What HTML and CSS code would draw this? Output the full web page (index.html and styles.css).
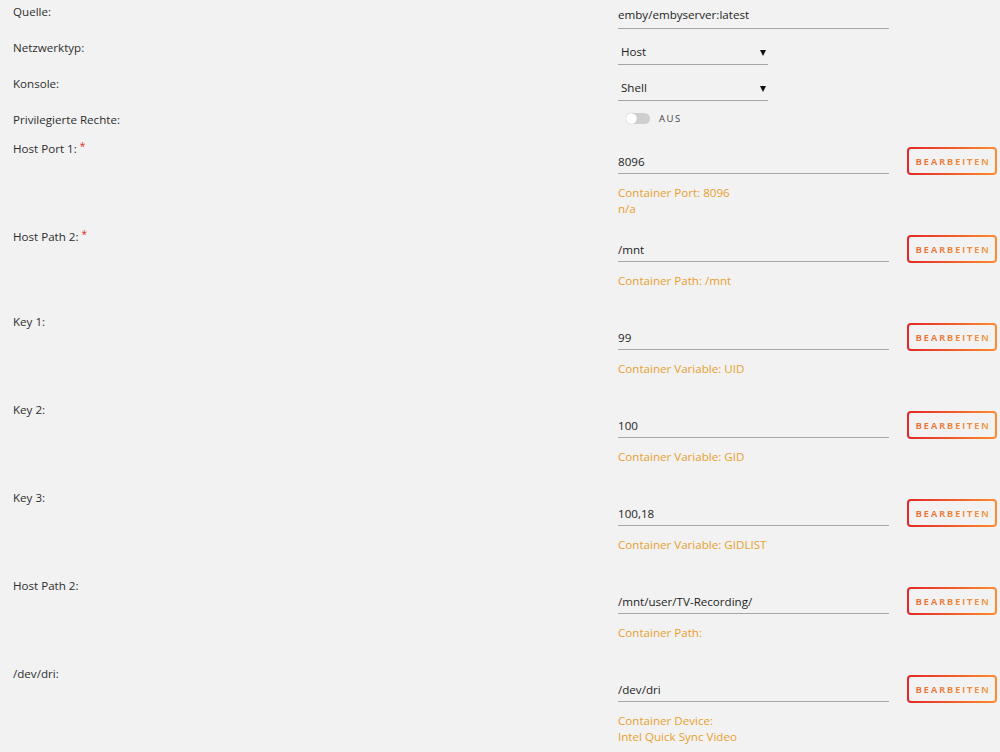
FILE: index.html
```html
<!DOCTYPE html>
<html lang="de">
	<head>
		<meta charset="UTF-8" />
		<title>Container bearbeiten</title>
		<link rel="stylesheet" href="styles.css">
	</head>
	<body>
		<div class="form">
			<div class="row">
				<label class="label">Quelle:</label>
				<div class="value">
					<input class="text-input" type="text" value="emby/embyserver:latest" />
				</div>
			</div>
			<div class="row">
				<label class="label">Netzwerktyp:</label>
				<div class="value">
					<div class="select-wrap">
						<select class="select">
							<option>Host</option>
							<option>Bridge</option>
							<option>None</option>
						</select>
					</div>
				</div>
			</div>
			<div class="row">
				<label class="label">Konsole:</label>
				<div class="value">
					<div class="select-wrap">
						<select class="select">
							<option>Shell</option>
							<option>Bash</option>
						</select>
					</div>
				</div>
			</div>
			<div class="row row-switch">
				<label class="label">Privilegierte Rechte:</label>
				<div class="value switch-line">
					<span class="switch"><span class="knob"></span></span>
					<span class="switch-text">AUS</span>
				</div>
			</div>

			<div class="config">
				<label class="label">Host Port 1: <span class="req">*</span></label>
				<div class="value">
					<input class="text-input" type="text" value="8096" />
					<div class="desc">Container Port: 8096<br />n/a</div>
				</div>
				<button class="edit"><span>BEARBEITEN</span></button>
			</div>
			<div class="config">
				<label class="label">Host Path 2: <span class="req">*</span></label>
				<div class="value">
					<input class="text-input" type="text" value="/mnt" />
					<div class="desc">Container Path: /mnt</div>
				</div>
				<button class="edit"><span>BEARBEITEN</span></button>
			</div>
			<div class="config">
				<label class="label">Key 1:</label>
				<div class="value">
					<input class="text-input" type="text" value="99" />
					<div class="desc">Container Variable: UID</div>
				</div>
				<button class="edit"><span>BEARBEITEN</span></button>
			</div>
			<div class="config">
				<label class="label">Key 2:</label>
				<div class="value">
					<input class="text-input" type="text" value="100" />
					<div class="desc">Container Variable: GID</div>
				</div>
				<button class="edit"><span>BEARBEITEN</span></button>
			</div>
			<div class="config">
				<label class="label">Key 3:</label>
				<div class="value">
					<input class="text-input" type="text" value="100,18" />
					<div class="desc">Container Variable: GIDLIST</div>
				</div>
				<button class="edit"><span>BEARBEITEN</span></button>
			</div>
			<div class="config">
				<label class="label">Host Path 2:</label>
				<div class="value">
					<input class="text-input" type="text" value="/mnt/user/TV-Recording/" />
					<div class="desc">Container Path:</div>
				</div>
				<button class="edit"><span>BEARBEITEN</span></button>
			</div>
			<div class="config">
				<label class="label">/dev/dri:</label>
				<div class="value">
					<input class="text-input" type="text" value="/dev/dri" />
					<div class="desc">Container Device:<br />Intel Quick Sync Video</div>
				</div>
				<button class="edit"><span>BEARBEITEN</span></button>
			</div>
		</div>
	</body>
</html>
```

FILE: styles.css
```css
html {
	overflow: hidden;
}

body {
	margin: 0;
	padding: 4px 0 0 13px;
	background: #f2f2f2;
	font-family: 'Open Sans', sans-serif;
	font-size: 11.6px;
	color: #2e2e2e;
}

.row {
	display: grid;
	grid-template-columns: 605px 271px;
	height: 36px;
}

.row-switch {
	height: 26px;
}

.label {
	line-height: 16px;
	color: #2e2e2e;
}

.req {
	color: #e22828;
	font-size: 10px;
	vertical-align: 3px;
}

.text-input {
	display: block;
	width: 100%;
	box-sizing: border-box;
	margin: 0;
	padding: 2px 0 6px 0;
	height: 25px;
	line-height: 16px;
	border: none;
	border-bottom: 1px solid #a6a6a6;
	background: transparent;
	font-family: inherit;
	font-size: 11.6px;
	color: #1e1e1e;
	outline: none;
}

.select-wrap {
	position: relative;
	width: 150px;
}

.select-wrap::after {
	content: '';
	position: absolute;
	right: 2px;
	top: 10px;
	border-left: 3px solid transparent;
	border-right: 3px solid transparent;
	border-top: 6px solid #111;
}

.select {
	display: block;
	width: 100%;
	height: 25px;
	box-sizing: border-box;
	margin: 0;
	padding: 4px 0 4px 3px;
	line-height: 16px;
	appearance: none;
	-webkit-appearance: none;
	border: none;
	border-bottom: 1px solid #a6a6a6;
	border-radius: 0;
	background: transparent;
	font-family: inherit;
	font-size: 11.6px;
	color: #1e1e1e;
	outline: none;
}

.switch-line {
	display: flex;
	align-items: center;
	gap: 9px;
	padding-left: 8px;
	height: 12px;
}

.switch {
	position: relative;
	display: inline-block;
	width: 24px;
	height: 11px;
	border-radius: 6px;
	background: #cfcfcf;
}

.knob {
	position: absolute;
	left: 0;
	top: 0;
	width: 11px;
	height: 11px;
	border-radius: 50%;
	background: #fff;
	box-shadow: 0 0 1px rgba(0, 0, 0, 0.3);
}

.switch-text {
	font-size: 9.5px;
	letter-spacing: 1.5px;
	color: #444;
}

.config {
	display: grid;
	grid-template-columns: 587px 271px 90px;
	column-gap: 18px;
	height: 88px;
	align-items: start;
}

.config .text-input {
	margin-top: 15px;
	padding: 0 0 4px 0;
	height: 21px;
}

.desc {
	margin-top: 11px;
	line-height: 16px;
	color: #e89f2e;
}

.edit {
	margin-top: 9px;
	height: 28px;
	width: 90px;
	padding: 0;
	border: 2px solid transparent;
	border-radius: 4px;
	background: linear-gradient(#f2f2f2, #f2f2f2) padding-box,
		linear-gradient(90deg, #e22828, #ff8c2f) border-box;
	font-family: inherit;
	font-size: 9.5px;
	font-weight: bold;
	letter-spacing: 1.7px;
	text-align: center;
	white-space: nowrap;
	cursor: pointer;
}

.edit span {
	padding-left: 2px;
	background: linear-gradient(90deg, #e8703a, #f29a4a);
	-webkit-background-clip: text;
	background-clip: text;
	color: transparent;
}
```
